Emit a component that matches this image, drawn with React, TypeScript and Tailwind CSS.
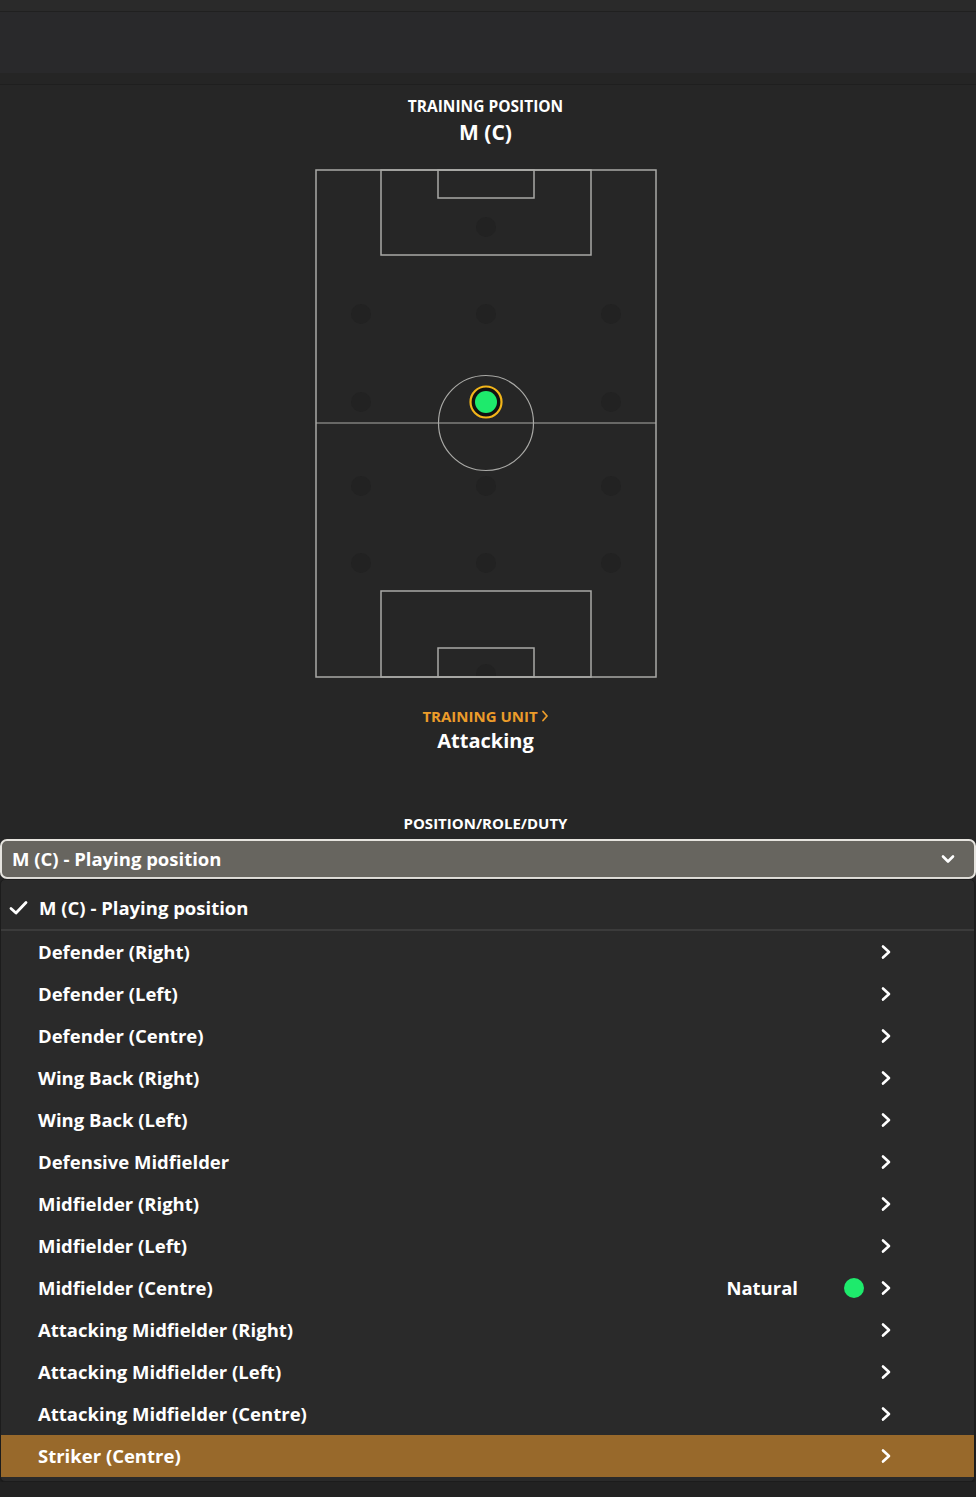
import React from "react";

const items = [
  "Defender (Right)",
  "Defender (Left)",
  "Defender (Centre)",
  "Wing Back (Right)",
  "Wing Back (Left)",
  "Defensive Midfielder",
  "Midfielder (Right)",
  "Midfielder (Left)",
  "Midfielder (Centre)",
  "Attacking Midfielder (Right)",
  "Attacking Midfielder (Left)",
  "Attacking Midfielder (Centre)",
  "Striker (Centre)",
];

function Chevron({ className = "" }: { className?: string }) {
  return (
    <svg width="12" height="16" viewBox="0 0 12 16" className={className}>
      <path d="M3 2.5 L9 8 L3 13.5" fill="none" stroke="currentColor" strokeWidth="2.6" strokeLinecap="round" strokeLinejoin="round" />
    </svg>
  );
}

function Pitch() {
  const dots: [number, number][] = [
    [170, 57],
    [45, 144], [170, 144], [295, 144],
    [45, 232], [295, 232],
    [45, 316], [170, 316], [295, 316],
    [45, 393], [170, 393], [295, 393],
    [170, 504],
  ];
  const line = "#a9a9a6";
  return (
    <svg width="342" height="509" viewBox="0 0 342 509" className="block">
      {dots.map(([x, y], i) => (
        <circle key={i} cx={x + 1} cy={y + 1} r="10" fill="#222222" />
      ))}
      <rect x="1" y="1" width="340" height="507" fill="none" stroke={line} strokeWidth="1.5" />
      <rect x="66" y="1" width="210" height="85" fill="none" stroke={line} strokeWidth="1.5" />
      <rect x="123" y="1" width="96" height="28" fill="none" stroke={line} strokeWidth="1.5" />
      <line x1="1" y1="254" x2="341" y2="254" stroke={line} strokeWidth="1.2" />
      <circle cx="171" cy="254" r="47.5" fill="none" stroke={line} strokeWidth="1.2" />
      <rect x="66" y="422" width="210" height="86" fill="none" stroke={line} strokeWidth="1.5" />
      <rect x="123" y="479" width="96" height="29" fill="none" stroke={line} strokeWidth="1.5" />
      <circle cx="171" cy="233" r="15.5" fill="#111" stroke="#f2b51a" strokeWidth="2.2" />
      <circle cx="171" cy="233" r="11" fill="#1eea6c" />
    </svg>
  );
}

export default function App() {
  return (
    <div
      className="w-[976px] h-[1497px] bg-[#262626] text-white overflow-hidden flex flex-col"
      style={{ fontFamily: "'Open Sans', Lato, sans-serif" }}
    >
      {/* top bars */}
      <div className="h-[12px] bg-[#2a2a2a] border-b border-[#202020]" />
      <div className="h-[61px] bg-[#29292b]" />
      <div className="h-[12px] bg-[#252525] border-b border-[#1f1f1f]" />

      {/* training position */}
      <div className="flex flex-col items-center pt-[12px] pr-[5px]">
        <div className="text-[15.5px] font-bold leading-[18px]">TRAINING POSITION</div>
        <div className="text-[21px] font-bold leading-[26px] mt-[4px]">M (C)</div>
        <div className="mt-[24px]">
          <Pitch />
        </div>
        <div className="mt-[29px] flex items-center gap-[3px] text-[#ec9c2a] text-[15px] font-bold leading-[18px]">
          TRAINING UNIT
          <svg width="8" height="12" viewBox="0 0 8 12">
            <path d="M2 1.5 L6 6 L2 10.5" fill="none" stroke="currentColor" strokeWidth="1.8" strokeLinecap="round" strokeLinejoin="round" />
          </svg>
        </div>
        <div className="text-[20px] font-bold leading-[28px] mt-[2px]">Attacking</div>
        <div className="mt-[59px] text-[15px] font-bold leading-[18px]">POSITION/ROLE/DUTY</div>
      </div>

      {/* select */}
      <div className="mt-[7px] h-[40px] bg-[#67655f] border-2 border-[#e6e4df] rounded-[7px] flex items-center justify-between pl-[10px] pr-[18px]">
        <span className="text-[18.5px] font-bold">M (C) - Playing position</span>
        <svg width="16" height="12" viewBox="0 0 16 12">
          <path d="M3 3.5 L8 8.5 L13 3.5" fill="none" stroke="#ffffff" strokeWidth="2.6" strokeLinecap="round" strokeLinejoin="round" />
        </svg>
      </div>

      {/* menu */}
      <div className="bg-[#2a2a2a] border border-[#1c1c1c] rounded-[5px] mr-[1px] h-[603px] flex flex-col overflow-hidden shadow-[0_2px_4px_rgba(0,0,0,0.5)]">
        <div className="h-[51px] flex items-center pl-[7px] pt-[6px] border-b-2 border-[#3b3b3b] shrink-0">
          <svg width="22" height="18" viewBox="0 0 22 18" className="mr-[9px]">
            <path d="M3 9.5 L8 14 L18 3.5" fill="none" stroke="#ffffff" strokeWidth="2.8" strokeLinecap="round" strokeLinejoin="round" />
          </svg>
          <span className="text-[18.5px] font-bold">M (C) - Playing position</span>
        </div>
        {items.map((it) => {
          const active = it === "Striker (Centre)";
          return (
            <div
              key={it}
              className={`h-[42px] shrink-0 flex items-center pl-[37px] ${active ? "bg-[#98692b]" : ""}`}
            >
              <span className="text-[18.5px] font-bold flex-1">{it}</span>
              {it === "Midfielder (Centre)" && (
                <>
                  <span className="text-[18.5px] font-bold mr-[46px]">Natural</span>
                  <span className="w-[20px] h-[20px] rounded-full bg-[#1eea6c] mr-[16px]" />
                </>
              )}
              <Chevron className="mr-[82px] text-white" />
            </div>
          );
        })}
      </div>
      <div className="flex-1 bg-[#222222]" />
    </div>
  );
}
